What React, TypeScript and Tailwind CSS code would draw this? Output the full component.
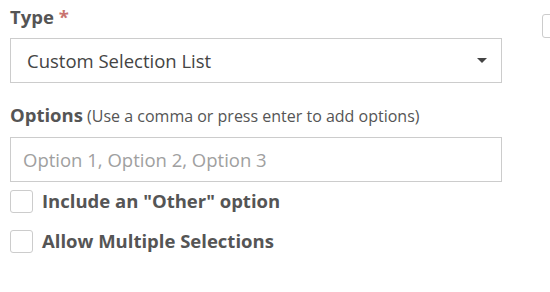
import React from "react";

export default function App() {
  return (
    <div
      className="w-[550px] h-[292px] bg-white relative overflow-hidden text-[#555]"
      style={{ fontFamily: '"Open Sans", sans-serif' }}
    >
      <div className="absolute left-[542px] top-[14px] w-[30px] h-[24px] border border-[#ccc] rounded-[3px]" />
      <div className="pl-[10px] pt-[4px] w-[502px]">
        <div className="text-[18.5px] leading-[26px] font-bold text-[#555]">
          Type <span className="text-[#c9736f]">*</span>
        </div>
        <div className="mt-[8px] h-[45px] border border-[#ccc] flex items-center justify-between pl-[16px] pr-[14px]">
          <span className="text-[18.5px] text-[#444]">Custom Selection List</span>
          <svg width="10" height="5" viewBox="0 0 10 5">
            <path d="M0 0H10L5 5Z" fill="#444" />
          </svg>
        </div>
        <div className="mt-[19px] leading-[26px]">
          <span className="text-[18.5px] font-bold">Options</span>{" "}
          <span className="text-[16px]">(Use a comma or press enter to add options)</span>
        </div>
        <div className="mt-[8px] h-[45px] border border-[#ccc] flex items-center pl-[12px]">
          <span className="text-[18.5px] text-[#a0a0a0]">Option 1, Option 2, Option 3</span>
        </div>
        <div className="mt-[7px] h-[24px] flex items-center gap-[9px]">
          <div className="w-[23px] h-[23px] border border-[#ccc] rounded-[3px]" />
          <span className="text-[18.5px] leading-[24px] font-bold">Include an "Other" option</span>
        </div>
        <div className="mt-[16px] h-[24px] flex items-center gap-[9px]">
          <div className="w-[23px] h-[23px] border border-[#ccc] rounded-[3px]" />
          <span className="text-[18.5px] leading-[24px] font-bold">Allow Multiple Selections</span>
        </div>
      </div>
    </div>
  );
}
